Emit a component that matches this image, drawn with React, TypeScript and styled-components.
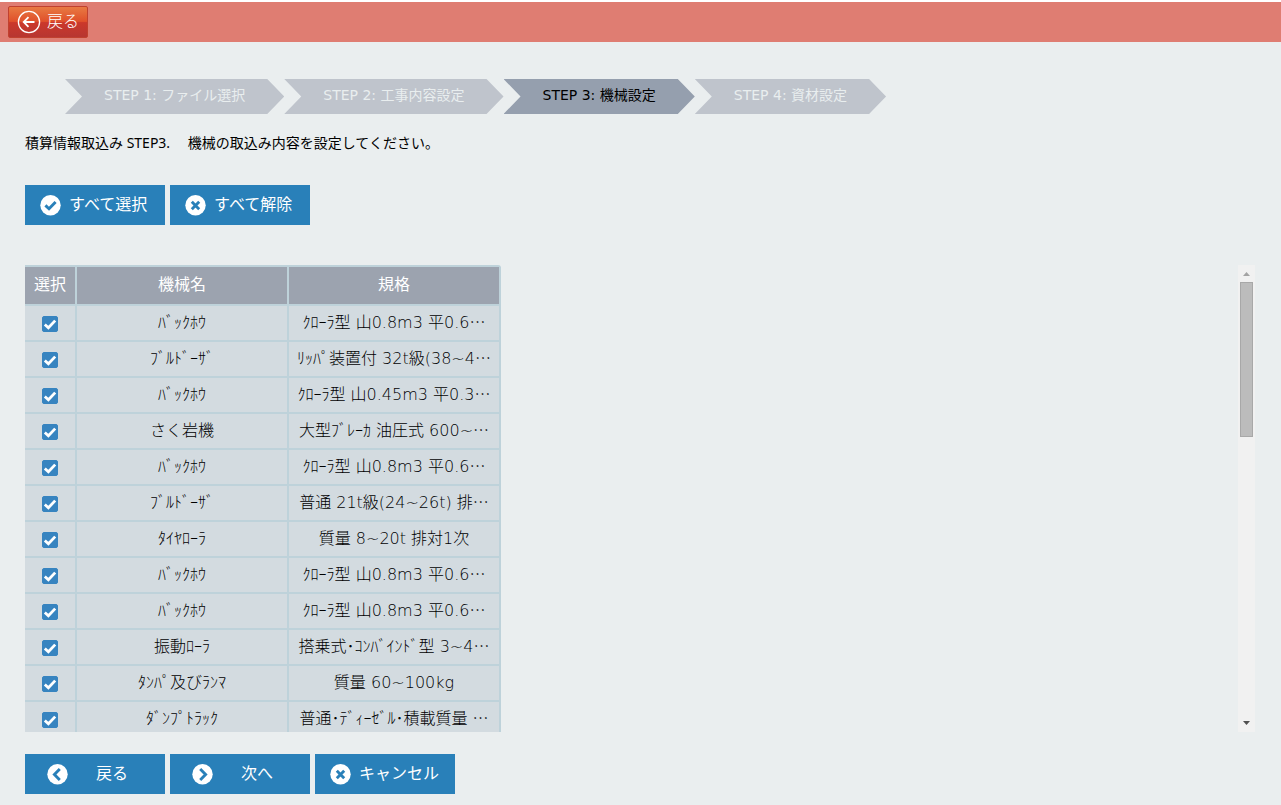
import React, { useState } from "react";
import styled, { createGlobalStyle } from "styled-components";

const GlobalStyle = createGlobalStyle`
  *, *::before, *::after { box-sizing: border-box; }
  body {
    margin: 0;
    background: #eaeeef;
    color: #000;
    font-family: "DejaVu Sans", "Noto Sans CJK JP", sans-serif;
    font-size: 16px;
  }
  button { font: inherit; cursor: pointer; }
`;

const Page = styled.div`
  display: flex;
  flex-direction: column;
  height: 100vh;
  border-top: 2px solid #fff;
`;

const TopBar = styled.header`
  display: flex;
  flex: none;
  align-items: center;
  height: 40px;
  padding: 0 8px;
  background: #df7d72;
`;

const TopBackButton = styled.button`
  display: flex;
  align-items: center;
  gap: 6px;
  width: 80px;
  height: 32px;
  padding: 0 8px;
  border: 1px solid #c1412f;
  border-radius: 2px;
  background: linear-gradient(#e87a42 0%, #e0502b 48%, #cb382b 52%, #b73631 100%);
  color: #fff;
  font-weight: 300;
  line-height: 24px;
  white-space: nowrap;
`;

const Main = styled.main`
  display: flex;
  flex: 1;
  flex-direction: column;
  min-height: 0;
  padding: 37px 26px 11px 25px;
`;

const Steps = styled.ol`
  display: flex;
  flex: none;
  margin: 0;
  padding: 0 0 0 40px;
  list-style: none;
`;

const Step = styled.li<{ $active?: boolean }>`
  height: 35px;
  padding: 0 39px;
  background: ${(p) => (p.$active ? "#959fae" : "#bfc4cc")};
  color: ${(p) => (p.$active ? "#000" : "#e9eeef")};
  font-size: 14px;
  line-height: 32px;
  white-space: nowrap;
  clip-path: polygon(0 0, calc(100% - 17px) 0, 100% 50%, calc(100% - 17px) 100%, 0 100%, 17px 50%);
`;

const Description = styled.p`
  flex: none;
  margin: 19px 0 32px;
  font-family: "Noto Sans", "Noto Sans CJK JP", sans-serif;
  font-size: 14px;
  line-height: 20px;
  white-space: pre;
`;

const ButtonRow = styled.div`
  display: flex;
  flex: none;
  gap: 5px;
`;

const ActionButton = styled.button<{ $wide?: boolean }>`
  display: flex;
  align-items: center;
  gap: ${(p) => (p.$wide ? 28 : 8)}px;
  width: 140px;
  height: 40px;
  padding: 0 0 0 ${(p) => (p.$wide ? 22 : 15)}px;
  border: 0;
  background: #2980b9;
  color: #fff;
  line-height: 24px;
  white-space: nowrap;
`;

const ScrollArea = styled.section`
  display: flex;
  flex: 1;
  justify-content: space-between;
  min-height: 0;
  margin: 40px 0 22px;
  overflow: hidden;
`;

const Table = styled.table`
  table-layout: fixed;
  width: 476px;
  height: max-content;
  border-top: 2px solid #bed2da;
  border-radius: 0 3px 0 0;
  border-spacing: 0;
  text-align: center;
`;

const HeadCell = styled.th<{ $width: number }>`
  width: ${(p) => p.$width}px;
  height: 39px;
  padding: 0 0 2px;
  border: solid #bed2da;
  border-width: 0 2px 2px 0;
  background: #9ca3af;
  color: #fff;
  font-weight: 400;
  line-height: 24px;
`;

const Cell = styled.td`
  height: 36px;
  padding: 0;
  border: solid #bed2da;
  border-width: 0 2px 2px 0;
  background: #d3dbe0;
  font-weight: 300;
  line-height: 24px;
  white-space: nowrap;
  overflow: hidden;
`;

const Ellipsis = styled.span`
  font-family: "Noto Sans CJK JP", sans-serif;
  line-height: 1;
`;

const Tick = styled.span`
  display: inline-grid;
  width: 16px;
  height: 16px;
  vertical-align: middle;

  > * { grid-area: 1 / 1; }
  svg { pointer-events: none; }
`;

const TickInput = styled.input`
  appearance: none;
  width: 16px;
  height: 16px;
  margin: 0;
  border: 1px solid #3784c0;
  border-radius: 2px;
  background: #fff;

  &:checked { background: #3784c0; }
`;

const ScrollTrack = styled.div`
  display: flex;
  flex: none;
  flex-direction: column;
  align-items: center;
  width: 17px;
  background: #f1f1f1;
`;

const ScrollThumb = styled.div`
  width: 13px;
  height: 155px;
  margin-bottom: auto;
  border: 1px solid #a8a8a8;
  background: #bcbcbc;
`;

const ScrollArrow = styled.svg`
  display: block;
  flex: none;
  width: 17px;
  height: 17px;
`;

type IconName = "check" | "cross" | "prev" | "next";

const marks: Record<IconName, string> = {
  check: "M5.4 10.4 9 13.8 15.6 7",
  cross: "M6.8 6.8 14.2 14.2M14.2 6.8 6.8 14.2",
  prev: "M12.8 5 7.4 10.5 12.8 16",
  next: "M8.2 5 13.6 10.5 8.2 16",
};

const CircleIcon = ({ name }: { name: IconName }) => (
  <svg width="21" height="21" viewBox="0 0 21 21" aria-hidden="true">
    <circle cx="10.5" cy="10.2" r="10.2" fill="#fff" />
    <path d={marks[name]} fill="none" stroke="#2980b9" strokeWidth="2.9" />
  </svg>
);

const STEPS = ["STEP 1: ファイル選択", "STEP 2: 工事内容設定", "STEP 3: 機械設定", "STEP 4: 資材設定"];

const ROWS: { name: string; spec: string; cut?: boolean }[] = [
  { name: "ﾊﾞｯｸﾎｳ", spec: "ｸﾛｰﾗ型 山0.8m3 平0.6", cut: true },
  { name: "ﾌﾞﾙﾄﾞｰｻﾞ", spec: "ﾘｯﾊﾟ装置付 32t級(38~4", cut: true },
  { name: "ﾊﾞｯｸﾎｳ", spec: "ｸﾛｰﾗ型 山0.45m3 平0.3", cut: true },
  { name: "さく岩機", spec: "大型ﾌﾞﾚｰｶ 油圧式 600~", cut: true },
  { name: "ﾊﾞｯｸﾎｳ", spec: "ｸﾛｰﾗ型 山0.8m3 平0.6", cut: true },
  { name: "ﾌﾞﾙﾄﾞｰｻﾞ", spec: "普通 21t級(24~26t) 排", cut: true },
  { name: "ﾀｲﾔﾛｰﾗ", spec: "質量 8~20t 排対1次" },
  { name: "ﾊﾞｯｸﾎｳ", spec: "ｸﾛｰﾗ型 山0.8m3 平0.6", cut: true },
  { name: "ﾊﾞｯｸﾎｳ", spec: "ｸﾛｰﾗ型 山0.8m3 平0.6", cut: true },
  { name: "振動ﾛｰﾗ", spec: "搭乗式･ｺﾝﾊﾞｲﾝﾄﾞ型 3~4", cut: true },
  { name: "ﾀﾝﾊﾟ及びﾗﾝﾏ", spec: "質量 60~100kg" },
  { name: "ﾀﾞﾝﾌﾟﾄﾗｯｸ", spec: "普通･ﾃﾞｨｰｾﾞﾙ･積載質量 ", cut: true },
];

export default function App() {
  const [picked, setPicked] = useState<boolean[]>(ROWS.map(() => true));
  const setAll = (value: boolean) => setPicked(ROWS.map(() => value));
  const toggle = (index: number) => setPicked(picked.map((v, i) => (i === index ? !v : v)));

  return (
    <>
      <GlobalStyle />
      <Page lang="ja">
        <TopBar>
          <TopBackButton type="button">
            <svg width="24" height="24" viewBox="0 0 24 24" fill="none" stroke="#fff" aria-hidden="true">
              <circle cx="12" cy="12" r="10.6" strokeWidth="1.3" />
              <path d="M17.5 12H7M11.5 7.2 6.7 12 11.5 16.8" strokeWidth="1.8" />
            </svg>
            戻る
          </TopBackButton>
        </TopBar>
        <Main>
          <Steps>
            {STEPS.map((label, i) => (
              <Step key={label} $active={i === 2}>{label}</Step>
            ))}
          </Steps>
          <Description>{"積算情報取込み STEP3.　 機械の取込み内容を設定してください。"}</Description>
          <ButtonRow>
            <ActionButton type="button" onClick={() => setAll(true)}>
              <CircleIcon name="check" />すべて選択
            </ActionButton>
            <ActionButton type="button" onClick={() => setAll(false)}>
              <CircleIcon name="cross" />すべて解除
            </ActionButton>
          </ButtonRow>
          <ScrollArea>
            <Table>
              <thead>
                <tr>
                  <HeadCell $width={52}>選択</HeadCell>
                  <HeadCell $width={212}>機械名</HeadCell>
                  <HeadCell $width={212}>規格</HeadCell>
                </tr>
              </thead>
              <tbody>
                {ROWS.map((row, i) => (
                  <tr key={i}>
                    <Cell>
                      <Tick>
                        <TickInput
                          type="checkbox"
                          aria-label={row.name}
                          checked={picked[i]}
                          onChange={() => toggle(i)}
                        />
                        <svg width="16" height="16" viewBox="0 0 16 16" aria-hidden="true">
                          <path d="M2.8 8.4 6.4 11.8 13.2 4.6" fill="none" stroke="#fff" strokeWidth="2.8" />
                        </svg>
                      </Tick>
                    </Cell>
                    <Cell>{row.name}</Cell>
                    <Cell>
                      {row.spec}
                      {row.cut && <Ellipsis>…</Ellipsis>}
                    </Cell>
                  </tr>
                ))}
              </tbody>
            </Table>
            <ScrollTrack aria-hidden="true">
              <ScrollArrow viewBox="0 0 17 17">
                <path d="M5 11 8.5 7 12 11Z" fill="#a3a3a3" />
              </ScrollArrow>
              <ScrollThumb />
              <ScrollArrow viewBox="0 0 17 17">
                <path d="M5 6 8.5 10 12 6Z" fill="#505050" />
              </ScrollArrow>
            </ScrollTrack>
          </ScrollArea>
          <ButtonRow>
            <ActionButton type="button" $wide>
              <CircleIcon name="prev" />戻る
            </ActionButton>
            <ActionButton type="button" $wide>
              <CircleIcon name="next" />次へ
            </ActionButton>
            <ActionButton type="button">
              <CircleIcon name="cross" />キャンセル
            </ActionButton>
          </ButtonRow>
        </Main>
      </Page>
    </>
  );
}
